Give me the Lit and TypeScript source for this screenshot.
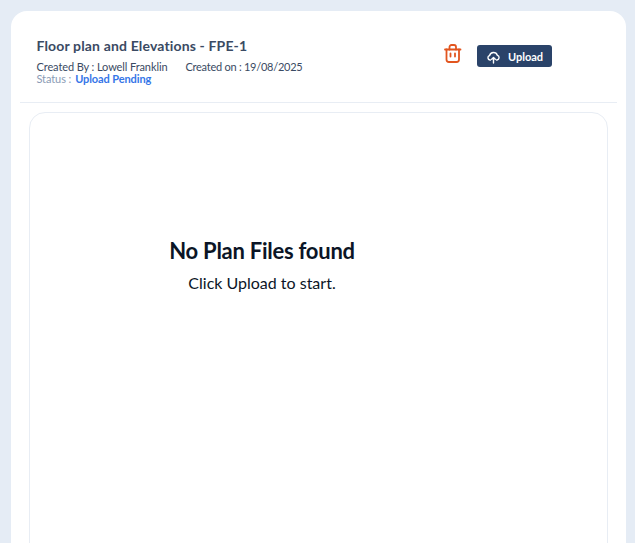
import { LitElement, html, css } from 'lit';
import { customElement } from 'lit/decorators.js';

@customElement('app-root')
export class AppRoot extends LitElement {
  static styles = css`
    :host {
      display: block;
      height: 543px;
      overflow: hidden;
      background: #e5ecf5;
      font-family: Lato, sans-serif;
    }
    .card {
      margin: 11px 9px 0 11px;
      height: 560px;
      background: #fff;
      border-radius: 16px;
      padding: 0 9px;
    }
    .head {
      height: 92px;
      box-sizing: border-box;
      border-bottom: 1px solid #e8edf4;
      display: flex;
      padding: 26px 0 0 16.5px;
    }
    .info {
      width: 406.5px;
    }
    h1 {
      margin: 0 0 7px;
      font-size: 14px;
      line-height: 17px;
      font-weight: 700;
      letter-spacing: 0.15px;
      color: #3a4a63;
    }
    .meta {
      font-size: 11px;
      line-height: 12px;
      letter-spacing: -0.1px;
      color: #3a4a63;
      display: flex;
      gap: 18px;
    }
    .date {
      letter-spacing: -0.25px;
    }
    .status {
      color: #8a9bb5;
      gap: 4px;
    }
    .status b {
      color: #3576e8;
      font-weight: 700;
    }
    .actions {
      display: flex;
      align-items: flex-start;
      gap: 14px;
    }
    .trash {
      width: 20px;
      height: 20px;
      margin-top: 7px;
    }
    .upload {
      width: 75px;
      height: 22px;
      margin-top: 8px;
      border: 0;
      padding: 0 0 0 10px;
      border-radius: 3px;
      background: #2a4369;
      color: #fff;
      font: 700 11px Lato, sans-serif;
      display: flex;
      align-items: center;
      gap: 8px;
    }
    .upload svg {
      width: 13px;
      height: 13px;
      margin-top: 2px;
    }
    .panel {
      margin: 9px 9px 0;
      height: 500px;
      box-sizing: border-box;
      border: 1px solid #e8edf4;
      border-radius: 16px;
      padding-top: 124px;
    }
    .empty {
      width: 464px;
      text-align: center;
      color: #0b1526;
    }
    h2 {
      margin: 0;
      font-size: 22px;
      line-height: 28px;
      font-weight: 700;
      letter-spacing: -0.25px;
    }
    p {
      margin: 8px 0 0;
      font-size: 16px;
      line-height: 20px;
    }
  `;

  render() {
    return html`
      <div class="card">
        <header class="head">
          <div class="info">
            <h1>Floor plan and Elevations - FPE-1</h1>
            <div class="meta">
              <span>Created By : Lowell Franklin</span>
              <span class="date">Created on : 19/08/2025</span>
            </div>
            <div class="meta status">
              <span>Status :</span>
              <b>Upload Pending</b>
            </div>
          </div>
          <div class="actions">
            <svg class="trash" viewBox="-1 0 20 20" fill="none" stroke="#e2551f" stroke-width="1.800" stroke-linecap="round" stroke-linejoin="round">
              <path d="M1 5.500h15.500" />
              <path d="M5.500 5.500V3a2 2 0 0 1 2-2h2.500a2 2 0 0 1 2 2v2.500" />
              <path d="M2.500 5.500v10a2.500 2.500 0 0 0 2.500 2.500h7.500a2.500 2.500 0 0 0 2.500-2.500v-10" />
              <path d="M6.500 9.500v3M11 9.500v3" />
            </svg>
            <button class="upload">
              <svg viewBox="0 0 13 13" fill="none" stroke="#fff" stroke-width="1.400" stroke-linecap="round" stroke-linejoin="round">
                <path d="M3.500 9H3A2.300 2.300 0 0 1 2.600 4.500 4 4 0 0 1 10.300 4.300 2.400 2.400 0 0 1 10 9h-.5" />
                <path d="M6.500 12V6.500M4.700 8.200 6.500 6.400l1.800 1.800" />
              </svg>
              <span>Upload</span>
            </button>
          </div>
        </header>
        <section class="panel">
          <div class="empty">
            <h2>No Plan Files found</h2>
            <p>Click Upload to start.</p>
          </div>
        </section>
      </div>
    `;
  }
}
